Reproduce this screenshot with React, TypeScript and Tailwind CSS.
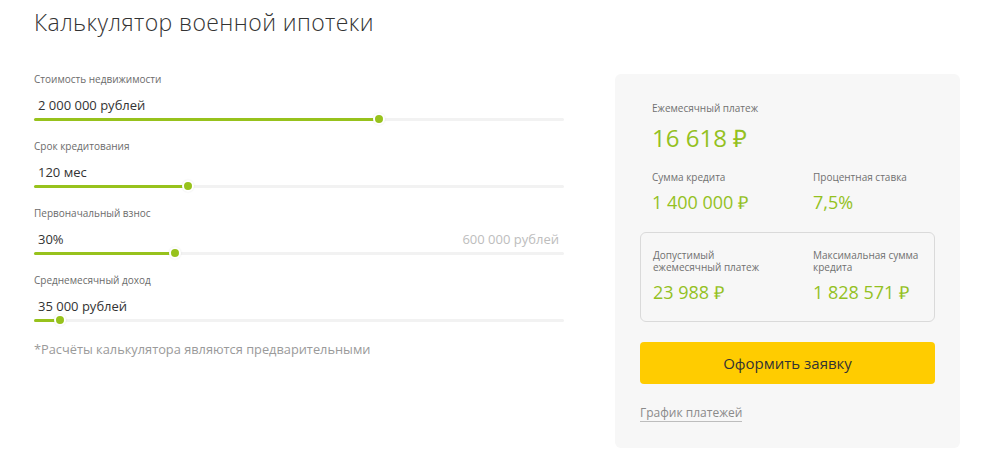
import React from 'react'

const font = { fontFamily: '"Open Sans", Lato, sans-serif' }

type SliderProps = {
  label: string
  value: string
  pct: number
  hint?: string
}

function Slider({ label, value, pct, hint }: SliderProps) {
  return (
    <div className="flex flex-col">
      <div className="text-[10px] leading-[14px] text-[#6b6b6b]">{label}</div>
      <div className="mt-[11px] flex items-center justify-between pl-[4px] pr-[5px]">
        <span className="text-[13px] leading-[16px] text-[#333]">{value}</span>
        {hint && <span className="text-[13px] leading-[16px] text-[#bdbdbd]">{hint}</span>}
      </div>
      <div className="relative mt-[1px] h-[10px]">
        <div className="absolute left-0 right-0 top-[4px] h-[3px] rounded-full bg-[#f2f2f2]" />
        <div
          className="absolute left-0 top-[4px] h-[3px] rounded-full bg-[#97c21c]"
          style={{ width: `${pct}px` }}
        />
        <div
          className="absolute top-[-1px] h-[12px] w-[12px] -translate-x-1/2 rounded-full border-2 border-white bg-[#97c21c] shadow-[0_0_2px_rgba(0,0,0,0.1)]"
          style={{ left: `${pct}px` }}
        />
      </div>
    </div>
  )
}

export default function App() {
  return (
    <div className="flex h-[450px] w-[1000px] bg-white px-[34px]" style={font}>
      {/* Left: title + sliders */}
      <div className="flex w-[530px] flex-col">
        <h1 className="mt-[8px] text-[23px] font-light leading-[28px] tracking-[0.4px] text-[#333]">
          Калькулятор военной ипотеки
        </h1>
        <div className="mt-[36px] flex flex-col gap-[15px]">
          <Slider label="Стоимость недвижимости" value="2 000 000 рублей" pct={345} />
          <Slider label="Срок кредитования" value="120 мес" pct={154} />
          <Slider label="Первоначальный взнос" value="30%" pct={141} hint="600 000 рублей" />
          <Slider label="Среднемесячный доход" value="35 000 рублей" pct={26} />
        </div>
        <p className="mt-[16px] text-[12.8px] leading-[16px] text-[#9a9a9a]">
          *Расчёты калькулятора являются предварительными
        </p>
      </div>

      {/* Right: results panel */}
      <div className="ml-[51px] mt-[74px] flex h-[374px] w-[345px] flex-col rounded-[6px] bg-[#f7f7f7] px-[25px] pt-[27px]">
        <div className="px-[12px]">
          <div className="text-[10px] leading-[14px] text-[#707070]">Ежемесячный платеж</div>
          <div className="mt-[8px] text-[24px] leading-[30px] text-[#94c11f]">16 618 ₽</div>
          <div className="mt-[17px] grid grid-cols-[161px_1fr]">
            <div>
              <div className="text-[10px] leading-[14px] text-[#707070]">Сумма кредита</div>
              <div className="mt-[7px] text-[18px] leading-[22px] text-[#94c11f]">1 400 000 ₽</div>
            </div>
            <div>
              <div className="text-[10px] leading-[14px] text-[#707070]">Процентная ставка</div>
              <div className="mt-[7px] text-[18px] leading-[22px] text-[#94c11f]">7,5%</div>
            </div>
          </div>
        </div>

        <div className="mt-[19px] grid h-[90px] grid-cols-[160px_1fr] rounded-[6px] border border-[#dadada] pl-[12px] pr-[4px] pt-[16px]">
          <div>
            <div className="text-[10px] leading-[12px] text-[#707070]">
              Допустимый
              <br />
              ежемесячный платеж
            </div>
            <div className="mt-[8px] text-[18px] leading-[22px] text-[#94c11f]">23 988 ₽</div>
          </div>
          <div>
            <div className="text-[10px] leading-[12px] text-[#707070]">
              Максимальная сумма
              <br />
              кредита
            </div>
            <div className="mt-[8px] text-[18px] leading-[22px] text-[#94c11f]">1 828 571 ₽</div>
          </div>
        </div>

        <button className="mt-[20px] h-[42px] w-full rounded-[4px] bg-[#ffcc00] text-[15px] text-[#333]">
          Оформить заявку
        </button>

        <div className="mt-[21px] flex">
          <a className="border-b border-[#bdbdbd] text-[12px] leading-[16px] text-[#8a8a8a]">
            График платежей
          </a>
        </div>
      </div>
    </div>
  )
}
